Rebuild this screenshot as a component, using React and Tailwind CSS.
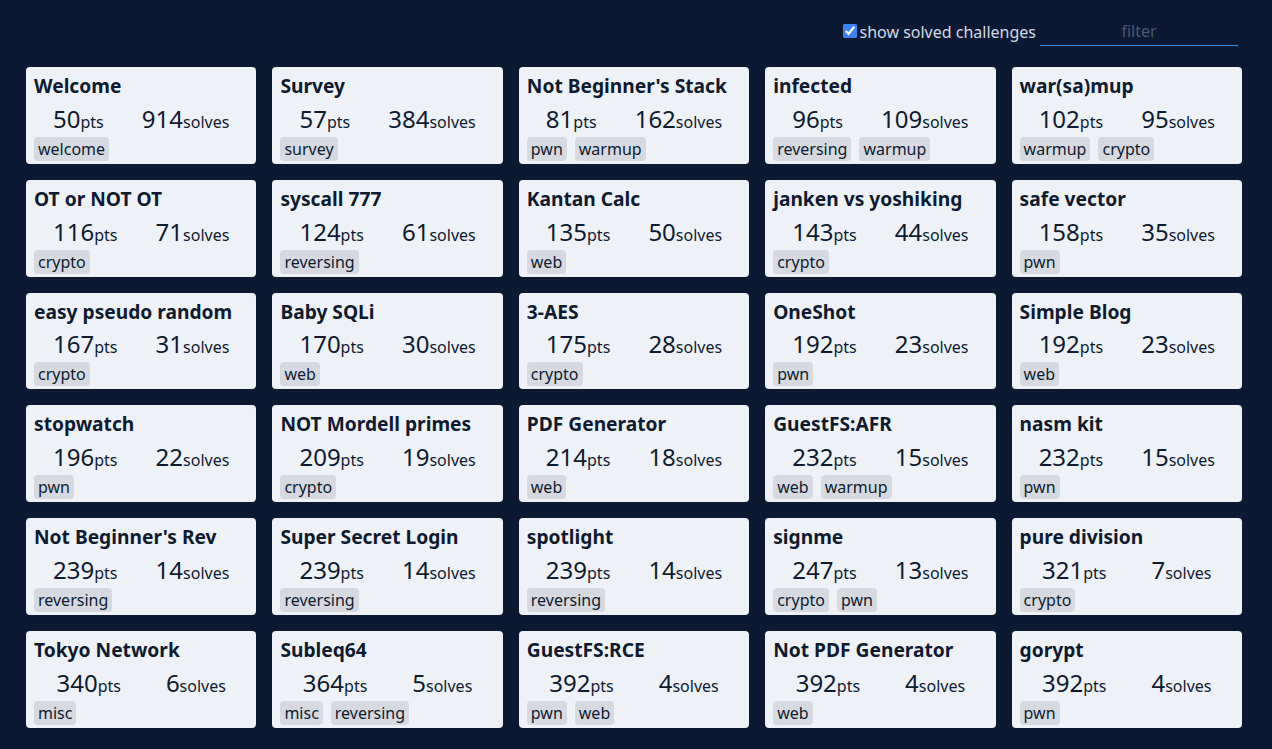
import React from "react";

const data = [
  ["Welcome", 50, 914, ["welcome"]],
  ["Survey", 57, 384, ["survey"]],
  ["Not Beginner's Stack", 81, 162, ["pwn", "warmup"]],
  ["infected", 96, 109, ["reversing", "warmup"]],
  ["war(sa)mup", 102, 95, ["warmup", "crypto"]],
  ["OT or NOT OT", 116, 71, ["crypto"]],
  ["syscall 777", 124, 61, ["reversing"]],
  ["Kantan Calc", 135, 50, ["web"]],
  ["janken vs yoshiking", 143, 44, ["crypto"]],
  ["safe vector", 158, 35, ["pwn"]],
  ["easy pseudo random", 167, 31, ["crypto"]],
  ["Baby SQLi", 170, 30, ["web"]],
  ["3-AES", 175, 28, ["crypto"]],
  ["OneShot", 192, 23, ["pwn"]],
  ["Simple Blog", 192, 23, ["web"]],
  ["stopwatch", 196, 22, ["pwn"]],
  ["NOT Mordell primes", 209, 19, ["crypto"]],
  ["PDF Generator", 214, 18, ["web"]],
  ["GuestFS:AFR", 232, 15, ["web", "warmup"]],
  ["nasm kit", 232, 15, ["pwn"]],
  ["Not Beginner's Rev", 239, 14, ["reversing"]],
  ["Super Secret Login", 239, 14, ["reversing"]],
  ["spotlight", 239, 14, ["reversing"]],
  ["signme", 247, 13, ["crypto", "pwn"]],
  ["pure division", 321, 7, ["crypto"]],
  ["Tokyo Network", 340, 6, ["misc"]],
  ["Subleq64", 364, 5, ["misc", "reversing"]],
  ["GuestFS:RCE", 392, 4, ["pwn", "web"]],
  ["Not PDF Generator", 392, 4, ["web"]],
  ["gorypt", 392, 4, ["pwn"]],
];

function Card({ name, pts, solves, tags }) {
  return (
    <div className="bg-[#eef2f7] rounded-[4px] px-2 pt-[5px] pb-[3px] text-[#0e1a30]">
      <div className="text-[19.2px] leading-[28.8px] font-bold whitespace-nowrap">{name}</div>
      <div className="flex justify-around leading-[36px] h-[36px]">
        <div className="whitespace-nowrap">
          <span className="text-[24px]">{pts}</span>
          <span className="text-[16px]">pts</span>
        </div>
        <div className="whitespace-nowrap">
          <span className="text-[24px]">{solves}</span>
          <span className="text-[16px]">solves</span>
        </div>
      </div>
      <div className="flex gap-2 h-[24px]">
        {tags.map((t) => (
          <span key={t} className="bg-[#d6dae0] rounded-[4px] px-1 text-[16px] leading-[24px]">
            {t}
          </span>
        ))}
      </div>
    </div>
  );
}

export default function App() {
  return (
    <div
      className="min-h-screen bg-[#0c1933] pl-[26px] pr-[30px]"
      style={{ fontFamily: '"Noto Sans", sans-serif' }}
    >
      <div className="flex justify-end items-center pt-[17px] pr-[4px] h-[46px]">
        <label className="flex items-center text-[16px] text-[#d3d9e2]">
          <input
            type="checkbox"
            defaultChecked
            className="w-[14px] h-[14px] mt-[1px] mr-[2px] mb-[3px] ml-[4px] accent-[#3b82f6]"
          />
          <span>show solved challenges</span>
        </label>
        <input
          placeholder="filter"
          className="ml-[4px] w-[198px] h-[28px] bg-transparent border-b border-[#3b8fe0] text-center text-[16px] text-[#d3d9e2] placeholder:text-[#4b5870] outline-none"
        />
      </div>
      <div className="grid grid-cols-5 gap-x-4 gap-y-4 mt-[21px]">
        {data.map(([n, p, s, t]) => (
          <Card key={n} name={n} pts={p} solves={s} tags={t} />
        ))}
      </div>
    </div>
  );
}
